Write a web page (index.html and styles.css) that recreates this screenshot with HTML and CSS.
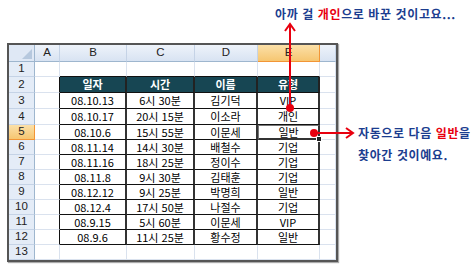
FILE: index.html
```html
<!DOCTYPE html>
<html lang="ko">
<head>
    <meta charset="UTF-8">
    <title>찾기 및 바꾸기</title>
    <link rel="stylesheet" href="styles.css">
</head>
<body>
    <div class="canvas">
        <div class="sheet">
            <!-- column headers -->
            <div class="corner"></div>
            <div class="ch">A</div>
            <div class="ch">B</div>
            <div class="ch">C</div>
            <div class="ch">D</div>
            <div class="ch sel">E</div>
            <div class="ch"></div>

            <!-- row 1 -->
            <div class="rh">1</div>
            <div class="g"></div>
            <div class="g top"></div>
            <div class="g top"></div>
            <div class="g top"></div>
            <div class="g top"></div>
            <div class="g"></div>

            <!-- row 2 -->
            <div class="rh">2</div>
            <div class="g edge"></div>
            <div class="th">일자</div>
            <div class="th">시간</div>
            <div class="th">이름</div>
            <div class="th">유형</div>
            <div class="g"></div>

            <div class="rh">3</div>
            <div class="g edge"></div>
            <div class="td">08.10.13</div>
            <div class="td">6시 30분</div>
            <div class="td">김기덕</div>
            <div class="td">VIP</div>
            <div class="g"></div>

            <div class="rh">4</div>
            <div class="g edge"></div>
            <div class="td">08.10.17</div>
            <div class="td">20시 15분</div>
            <div class="td">이소라</div>
            <div class="td">개인</div>
            <div class="g"></div>

            <div class="rh sel">5</div>
            <div class="g edge"></div>
            <div class="td">08.10.6</div>
            <div class="td">15시 55분</div>
            <div class="td">이문세</div>
            <div class="td sel">일반<span class="handle"></span></div>
            <div class="g"></div>

            <div class="rh">6</div>
            <div class="g edge"></div>
            <div class="td">08.11.14</div>
            <div class="td">14시 30분</div>
            <div class="td">배철수</div>
            <div class="td">기업</div>
            <div class="g"></div>

            <div class="rh">7</div>
            <div class="g edge"></div>
            <div class="td">08.11.16</div>
            <div class="td">18시 25분</div>
            <div class="td">정이수</div>
            <div class="td">기업</div>
            <div class="g"></div>

            <div class="rh">8</div>
            <div class="g edge"></div>
            <div class="td">08.11.8</div>
            <div class="td">9시 30분</div>
            <div class="td">김태훈</div>
            <div class="td">기업</div>
            <div class="g"></div>

            <div class="rh">9</div>
            <div class="g edge"></div>
            <div class="td">08.12.12</div>
            <div class="td">9시 25분</div>
            <div class="td">박명희</div>
            <div class="td">일반</div>
            <div class="g"></div>

            <div class="rh">10</div>
            <div class="g edge"></div>
            <div class="td">08.12.4</div>
            <div class="td">17시 50분</div>
            <div class="td">나절수</div>
            <div class="td">기업</div>
            <div class="g"></div>

            <div class="rh">11</div>
            <div class="g edge"></div>
            <div class="td">08.9.15</div>
            <div class="td">5시 60분</div>
            <div class="td">이문세</div>
            <div class="td">VIP</div>
            <div class="g"></div>

            <div class="rh">12</div>
            <div class="g edge"></div>
            <div class="td">08.9.6</div>
            <div class="td">11시 25분</div>
            <div class="td">황수정</div>
            <div class="td">일반</div>
            <div class="g"></div>

            <div class="rh">13</div>
            <div class="g"></div>
            <div class="g"></div>
            <div class="g"></div>
            <div class="g"></div>
            <div class="g"></div>
            <div class="g"></div>
        </div>

        <!-- callouts -->
        <svg class="arrows" width="472" height="266" viewBox="0 0 472 266">
            <g stroke="#e8000f" stroke-width="2" fill="none">
                <line x1="290" y1="24" x2="290" y2="108"/>
                <polyline points="285,31 290,24 295,31"/>
                <line x1="314" y1="133" x2="353" y2="133"/>
                <polyline points="346,128 353,133 346,138"/>
            </g>
            <circle cx="290" cy="108" r="4" fill="#e8000f"/>
            <circle cx="314" cy="133" r="4" fill="#e8000f"/>
        </svg>
        <p class="note note-top">아까 걸 <em>개인</em>으로 바꾼 것이고요...</p>
        <p class="note note-side">자동으로 다음 <em>일반</em>을<br>찾아간 것이예요.</p>
    </div>
</body>
</html>
```

FILE: styles.css
```css
* {
    margin: 0;
    padding: 0;
    box-sizing: border-box;
}

body {
    background: #fff;
    font-family: "Noto Sans CJK KR", "Noto Sans", sans-serif;
}

.canvas {
    position: relative;
    width: 472px;
    height: 266px;
    padding: 43px 0 0 7px;
}

.sheet {
    display: grid;
    grid-template-columns: 26px 25px 67px 68px 63px 62px 16px;
    grid-template-rows: 17px 15px 16px 16px 16px repeat(9, 15px);
    width: 331px;
    border: 2px solid #555;
    box-shadow: 1px 1px 1px #aaa;
    font-size: 11px;
    color: #000;
}

.sheet > div {
    display: flex;
    align-items: center;
    justify-content: center;
    line-height: 1;
}

/* headers */
.corner {
    position: relative;
    background: #dfe8f5;
    border-right: 1px solid #9eb6ce;
    border-bottom: 1px solid #9eb6ce;
}

.corner::after {
    content: "";
    position: absolute;
    right: 2px;
    bottom: 2px;
    border-left: 10px solid transparent;
    border-bottom: 10px solid #b6c8de;
}

.ch,
.rh {
    font-family: "Liberation Sans", Arial, sans-serif;
    font-size: 11.5px;
    color: #222;
}

.ch {
    background: linear-gradient(#eef3fa, #d8e3f2);
    border-right: 1px solid #c5d3e6;
    border-bottom: 1px solid #9eb6ce;
}

.rh {
    background: #e4ecf7;
    border-right: 1px solid #9eb6ce;
    border-bottom: 1px solid #c5d3e6;
}

.ch.sel,
.rh.sel {
    background: linear-gradient(#fbe0a8, #f6c671);
    border-color: #f29536;
}

/* plain grid cells */
.g {
    border-right: 1px solid #dae2ee;
    border-bottom: 1px solid #dae2ee;
}

.g.edge {
    border-right-color: #111;
}

.g.top {
    border-bottom-color: #111;
}

/* the data table */
.th {
    background: #174653;
    color: #fff;
    font-weight: bold;
    border-right: 2px solid #222;
    border-bottom: 1px solid #111;
}

.td {
    background: #fff;
    border-right: 2px solid #333;
    border-bottom: 1px solid #111;
}

.td.sel {
    position: relative;
    border: 2px solid #333;
    border-left: 1px solid #777;
    border-top: 1px solid #777;
}

.handle {
    position: absolute;
    right: -4px;
    bottom: -4px;
    width: 6px;
    height: 6px;
    background: #222;
    border: 1px solid #fff;
}

/* callouts */
.arrows {
    position: absolute;
    left: 0;
    top: 0;
}

.note {
    position: absolute;
    color: #1b3d8f;
    font-size: 12px;
    font-weight: bold;
    letter-spacing: 0.6px;
    line-height: 22px;
    white-space: nowrap;
}

.note em {
    font-style: normal;
    color: #e8000f;
}

.note-top {
    left: 275px;
    top: 3px;
}

.note-side {
    left: 358px;
    top: 122px;
}
```
